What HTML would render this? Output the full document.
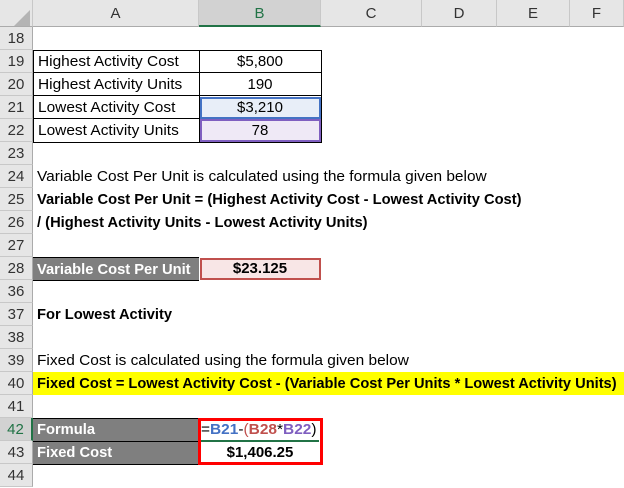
<!DOCTYPE html>
<html><head><style>
body{margin:0;width:624px;height:488px;position:relative;background:#fff;font-family:"Liberation Sans",sans-serif;overflow:hidden}
div{position:absolute;box-sizing:border-box}
.ch{top:0;height:27px;background:#e6e6e6;border-right:1px solid #c8c8c8;border-bottom:1px solid #ababab;text-align:center;line-height:27px;font-size:15px;color:#333}
.rh{left:0;width:33px;height:23px;background:#e6e6e6;border-bottom:1px solid #c8c8c8;border-right:1px solid #ababab;text-align:center;line-height:23px;font-size:15px;color:#333}
.t{height:23px;line-height:23px;font-size:15px;white-space:nowrap;transform-origin:0 50%;transform:scaleX(1.03)}
.t.b{transform:scaleX(.98)}
.b{font-weight:bold}
.c{height:23px;line-height:23px;font-size:15px;text-align:center;white-space:nowrap}
</style></head><body>
<div class="ch" style="left:0;width:33px;"></div>
<svg style="position:absolute;left:14px;top:10px" width="16" height="16"><polygon points="16,0 16,16 0,16" fill="#b4b4b4"/></svg>
<div class="ch" style="left:33px;width:166px">A</div>
<div class="ch" style="left:199px;width:122px;background:#d2d2d2;border-bottom:2px solid #217346;color:#217346">B</div>
<div class="ch" style="left:321px;width:101px">C</div>
<div class="ch" style="left:422px;width:75px">D</div>
<div class="ch" style="left:497px;width:73px">E</div>
<div class="ch" style="left:570px;width:54px">F</div>

<div class="rh" style="top:27px">18</div>
<div class="rh" style="top:50px">19</div>
<div class="rh" style="top:73px">20</div>
<div class="rh" style="top:96px">21</div>
<div class="rh" style="top:119px">22</div>
<div class="rh" style="top:142px">23</div>
<div class="rh" style="top:165px">24</div>
<div class="rh" style="top:188px">25</div>
<div class="rh" style="top:211px">26</div>
<div class="rh" style="top:234px">27</div>
<div class="rh" style="top:257px">28</div>
<div class="rh" style="top:280px">36</div>
<div class="rh" style="top:303px">37</div>
<div class="rh" style="top:326px">38</div>
<div class="rh" style="top:349px">39</div>
<div class="rh" style="top:372px">40</div>
<div class="rh" style="top:395px">41</div>
<div class="rh" style="top:418px;background:#d2d2d2;color:#217346;border-right:2px solid #217346">42</div>
<div class="rh" style="top:441px">43</div>
<div class="rh" style="top:464px">44</div>

<div style="left:33px;top:50px;width:289px;height:93px;border:1px solid #000"></div>
<div style="left:199px;top:50px;width:1px;height:93px;background:#000"></div>
<div style="left:33px;top:72px;width:289px;height:1px;background:#000"></div>
<div style="left:33px;top:95px;width:289px;height:1px;background:#000"></div>
<div style="left:33px;top:118px;width:289px;height:1px;background:#000"></div>
<div style="left:200px;top:97px;width:121px;height:22px;background:#e8eef8;border:2px solid #4472c4"></div>
<div style="left:200px;top:119px;width:121px;height:23px;background:#efe9f6;border:2px solid #7f5fc0"></div>
<div class="t" style="left:38px;top:50px">Highest Activity Cost</div>
<div class="t" style="left:38px;top:73px">Highest Activity Units</div>
<div class="t" style="left:38px;top:96px">Lowest Activity Cost</div>
<div class="t" style="left:38px;top:119px">Lowest Activity Units</div>
<div class="c" style="left:199px;top:50px;width:122px">$5,800</div>
<div class="c" style="left:199px;top:73px;width:122px">190</div>
<div class="c" style="left:199px;top:96px;width:122px">$3,210</div>
<div class="c" style="left:199px;top:119px;width:122px">78</div>

<div class="t" style="left:37px;top:165px">Variable Cost Per Unit is calculated using the formula given below</div>
<div class="t b" style="left:37px;top:188px">Variable Cost Per Unit = (Highest Activity Cost - Lowest Activity Cost)</div>
<div class="t b" style="left:37px;top:211px">/ (Highest Activity Units - Lowest Activity Units)</div>

<div style="left:33px;top:257px;width:166px;height:24px;background:#7f7f7f;border-top:1px solid #000;border-bottom:1px solid #000"></div>
<div class="t b" style="left:37px;top:258px;color:#fff">Variable Cost Per Unit</div>
<div style="left:200px;top:258px;width:121px;height:22px;background:#f8e6e6;border:2px solid #c0504d"></div>
<div class="c b" style="left:199px;top:257px;width:122px">$23.125</div>

<div class="t b" style="left:37px;top:303px">For Lowest Activity</div>
<div class="t" style="left:37px;top:349px">Fixed Cost is calculated using the formula given below</div>
<div style="left:33px;top:372px;width:591px;height:23px;background:#ffff00"></div>
<div class="t b" style="left:37px;top:372px;transform:scaleX(.975)">Fixed Cost = Lowest Activity Cost - (Variable Cost Per Units * Lowest Activity Units)</div>

<div style="left:33px;top:418px;width:166px;height:47px;background:#7f7f7f;border-top:1px solid #000;border-bottom:1px solid #000"></div>
<div style="left:33px;top:441px;width:166px;height:1px;background:#000"></div>
<div class="t b" style="left:37px;top:418px;color:#fff">Formula</div>
<div class="t b" style="left:37px;top:441px;color:#fff">Fixed Cost</div>
<div style="left:198px;top:418px;width:125px;height:47px;border:3px solid #ff0000"></div>
<div style="left:201px;top:440px;width:118px;height:2px;background:#217346"></div>
<div class="t" style="left:201px;top:418px">=<span style="color:#4472c4;font-weight:bold">B21</span>-<span style="color:#c0504d">(</span><span style="color:#c0504d;font-weight:bold">B28</span>*<span style="color:#7f5fc0;font-weight:bold">B22</span>)</div>
<div class="c b" style="left:199px;top:441px;width:122px">$1,406.25</div>
</body></html>
